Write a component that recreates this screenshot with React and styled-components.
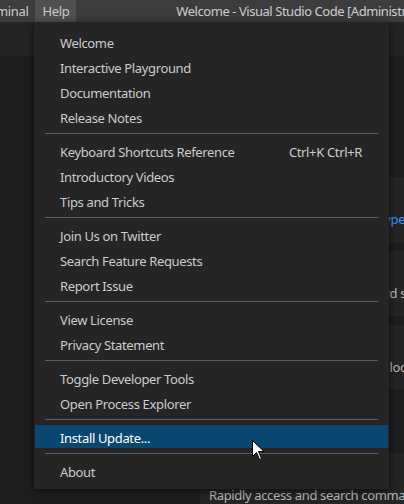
import styled, { createGlobalStyle } from "styled-components";

const GlobalStyle = createGlobalStyle`
  html, body {
    margin: 0;
    padding: 0;
    background: #1e1e1e;
  }
  body {
    font-family: "Noto Sans", "Open Sans", sans-serif;
    font-size: 13px;
    letter-spacing: -0.35px;
  }
`;

const Window = styled.div`
  position: relative;
  width: 404px;
  height: 504px;
  overflow: hidden;
  display: flex;
  flex-direction: column;
  background: #1e1e1e;
`;

const TitleBar = styled.div`
  height: 22px;
  flex: none;
  display: flex;
  align-items: stretch;
  background: #3c3c3c;
  color: #cccccc;
  white-space: nowrap;
  overflow: hidden;
`;

const MenuBar = styled.div`
  display: flex;
  margin-left: -29px;
`;

const MenuButton = styled.div`
  display: flex;
  align-items: center;
  padding: 0 7px;
  line-height: 22px;
  background: ${({ $active }) => ($active ? "#505050" : "transparent")};
`;

const Title = styled.div`
  display: flex;
  align-items: center;
  padding-left: 100px;
  letter-spacing: -0.45px;
`;

const TabBar = styled.div`
  height: 34px;
  flex: none;
  background: #252526;
`;

const Editor = styled.div`
  flex: 1;
  display: grid;
  grid-template-columns: 200px 420px;
  overflow: hidden;
`;

const Column = styled.div`
  display: flex;
  flex-direction: column;
  padding-top: ${({ $top }) => $top}px;
`;

const SectionTitle = styled.div`
  height: ${({ $height }) => $height}px;
  display: flex;
  align-items: center;
  color: #cccccc;
  font-size: 18px;
`;

const Card = styled.div`
  height: 65px;
  flex: none;
  box-sizing: border-box;
  padding: 12px 9px 0;
  margin-bottom: 9px;
  background: #252526;
  color: #b8b8b8;
  white-space: nowrap;
  line-height: 20px;
`;

const CardHeading = styled.div`
  color: #ffffff;
`;

const Link = styled.span`
  color: #3794ff;
`;

const Dropdown = styled.div`
  position: absolute;
  left: 34px;
  top: 22px;
  width: 355px;
  box-sizing: border-box;
  padding: 7px 0 6px;
  background: #252526;
  box-shadow: 0 2px 8px rgba(0, 0, 0, 0.6);
  display: flex;
  flex-direction: column;
`;

const Group = styled.div`
  display: flex;
  flex-direction: column;
`;

const Item = styled.div`
  height: 23px;
  flex: none;
  margin: 1px 1px;
  padding: 2px 26px 0 25px;
  box-sizing: border-box;
  display: flex;
  align-items: center;
  justify-content: space-between;
  color: ${({ $selected }) => ($selected ? "#ffffff" : "#cccccc")};
  background: ${({ $selected }) => ($selected ? "#094771" : "transparent")};
  white-space: nowrap;
`;

const Separator = styled.div`
  height: 1px;
  flex: none;
  margin: 4px 11px;
  background: #5f5f5f;
`;

const Pointer = styled.svg`
  position: absolute;
  left: 252px;
  top: 440px;
`;

const groups = [
  [["Welcome"], ["Interactive Playground"], ["Documentation"], ["Release Notes"]],
  [["Keyboard Shortcuts Reference", "Ctrl+K Ctrl+R"], ["Introductory Videos"], ["Tips and Tricks"]],
  [["Join Us on Twitter"], ["Search Feature Requests"], ["Report Issue"]],
  [["View License"], ["Privacy Statement"]],
  [["Toggle Developer Tools"], ["Open Process Explorer"]],
  [["Install Update..."]],
  [["About"]],
];

export default function App() {
  return (
    <Window>
      <GlobalStyle />
      <TitleBar>
        <MenuBar>
          <MenuButton>Terminal</MenuButton>
          <MenuButton $active>Help</MenuButton>
        </MenuBar>
        <Title>Welcome - Visual Studio Code [Administrator]</Title>
      </TitleBar>
      <TabBar />
      <Editor>
        <Column $top={0} />
        <Column $top={58}>
          <SectionTitle $height={63}>Customize</SectionTitle>
          <Card>
            <CardHeading>Tools and languages</CardHeading>
            Install support for <Link>JavaScript</Link>, <Link>TypeScript</Link>, <Link>Python</Link>, <Link>PHP</Link>
          </Card>
          <Card>
            <CardHeading>Settings and keybindings</CardHeading>
            Install the settings and keyboard shortcuts of <Link>Vim</Link>, <Link>Sublime</Link>
          </Card>
          <Card>
            <CardHeading>Color theme</CardHeading>
            Make the editor and your code look the way you love
          </Card>
          <SectionTitle $height={54}>Learn</SectionTitle>
          <Card>
            <CardHeading>Find and run all commands</CardHeading>
            Rapidly access and search commands from the Command Palette
          </Card>
        </Column>
      </Editor>
      <Dropdown>
        {groups.map((group, gi) => (
          <Group key={gi}>
            {gi > 0 && <Separator />}
            {group.map(([label, keys]) => (
              <Item key={label} $selected={label === "Install Update..."}>
                <span>{label}</span>
                {keys && <span>{keys}</span>}
              </Item>
            ))}
          </Group>
        ))}
      </Dropdown>
      <Pointer width="13" height="21" viewBox="0 0 13 21">
        <path
          d="M0.5 0.5 L0.5 16.5 L4.5 12.5 L7.5 19.5 L9.5 18.5 L6.5 11.5 L12 11.5 Z"
          fill="#ffffff"
          stroke="#000000"
          strokeWidth="1"
          strokeLinejoin="miter"
        />
      </Pointer>
    </Window>
  );
}
